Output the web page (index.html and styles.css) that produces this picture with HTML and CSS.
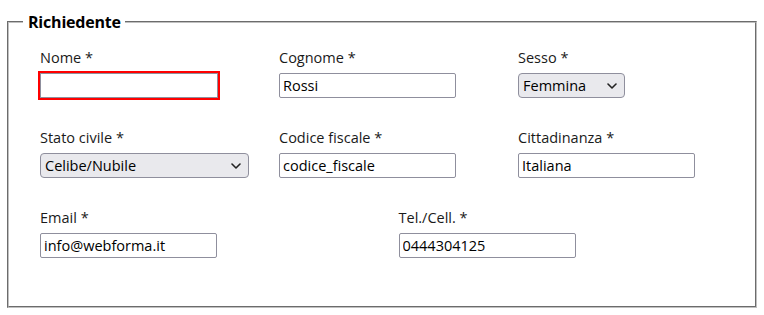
FILE: index.html
```html
<!DOCTYPE html>
<html lang="it">
<head>
<meta charset="utf-8">
<link rel="stylesheet" href="styles.css">
</head>
<body>
<fieldset class="box">
  <legend class="box-title">Richiedente</legend>
  <div class="grid">
    <div class="field third">
      <label class="lbl" for="nome">Nome *</label>
      <input class="inp invalid" id="nome" type="text" value="">
    </div>
    <div class="field third">
      <label class="lbl" for="cognome">Cognome *</label>
      <input class="inp" id="cognome" type="text" value="Rossi">
    </div>
    <div class="field third">
      <label class="lbl" for="sesso">Sesso *</label>
      <span class="sel-wrap sel-small">
        <select class="sel" id="sesso"><option>Femmina</option><option>Maschio</option></select>
        <svg class="chev" width="10" height="6" viewBox="0 0 10 6"><path d="M1 1 L5 5 L9 1" fill="none" stroke="#222" stroke-width="1.6" stroke-linecap="round" stroke-linejoin="round"/></svg>
      </span>
    </div>
    <div class="field third">
      <label class="lbl" for="stato">Stato civile *</label>
      <span class="sel-wrap sel-wide">
        <select class="sel" id="stato"><option>Celibe/Nubile</option><option>Coniugato/a</option></select>
        <svg class="chev" width="10" height="6" viewBox="0 0 10 6"><path d="M1 1 L5 5 L9 1" fill="none" stroke="#222" stroke-width="1.6" stroke-linecap="round" stroke-linejoin="round"/></svg>
      </span>
    </div>
    <div class="field third">
      <label class="lbl" for="cf">Codice fiscale *</label>
      <input class="inp" id="cf" type="text" value="codice_fiscale">
    </div>
    <div class="field third">
      <label class="lbl" for="citt">Cittadinanza *</label>
      <input class="inp" id="citt" type="text" value="Italiana">
    </div>
    <div class="field half">
      <label class="lbl" for="email">Email *</label>
      <input class="inp" id="email" type="text" value="info@webforma.it">
    </div>
    <div class="field half">
      <label class="lbl" for="tel">Tel./Cell. *</label>
      <input class="inp" id="tel" type="text" value="0444304125">
    </div>
  </div>
</fieldset>
</body>
</html>
```

FILE: styles.css
```css
html, body {
  margin: 0;
  padding: 0;
  background: #ffffff;
}
body {
  padding: 0 7px;
  font-family: "Open Sans", "Noto Sans", sans-serif;
  color: #1a1a1a;
}
.box {
  margin: 11px 0 0 0;
  width: 750px;
  height: 297px;
  box-sizing: border-box;
  border: 2px groove #c0c0c0;
  padding: 0 10px 0 14px;
}
.box-title {
  padding: 0 4px 0 5px;
  font-weight: 700;
  font-size: 16px;
  line-height: 22px;
  letter-spacing: -0.2px;
  color: #000;
}
.grid {
  margin-left: 5px;
  margin-top: 15px;
  width: 717px;
  display: grid;
  grid-template-columns: repeat(6, 1fr);
  row-gap: 30px;
}
.field {
  padding-left: 12px;
  display: flex;
  flex-direction: column;
  align-items: flex-start;
}
.third { grid-column: span 2; }
.half { grid-column: span 3; }
.lbl {
  font-size: 14.5px;
  line-height: 20px;
  margin-bottom: 5px;
  color: #1a1a1a;
}
.inp {
  width: 177px;
  height: 25px;
  box-sizing: border-box;
  border: 1px solid #8f8f9d;
  border-radius: 2px;
  padding: 0 3px;
  font-family: "Open Sans", "Noto Sans", sans-serif;
  font-size: 14.5px;
  color: #000;
  background: #fff;
}
.inp.invalid {
  width: 178px;
  border-radius: 0;
  outline: 2px solid #ff0000;
}
.sel-wrap {
  position: relative;
  display: inline-block;
  height: 25px;
}
.sel-small { width: 107px; }
.sel-wide { width: 209px; }
.sel {
  -webkit-appearance: none;
  appearance: none;
  width: 100%;
  height: 25px;
  box-sizing: border-box;
  border: 1px solid #8f8f9d;
  border-radius: 4px;
  background: #e9e9ed;
  font-family: "Open Sans", "Noto Sans", sans-serif;
  font-size: 14.5px;
  color: #000;
  padding: 0 20px 0 4px;
  margin: 0;
}
.chev {
  position: absolute;
  right: 8px;
  top: 10px;
  pointer-events: none;
}
```
